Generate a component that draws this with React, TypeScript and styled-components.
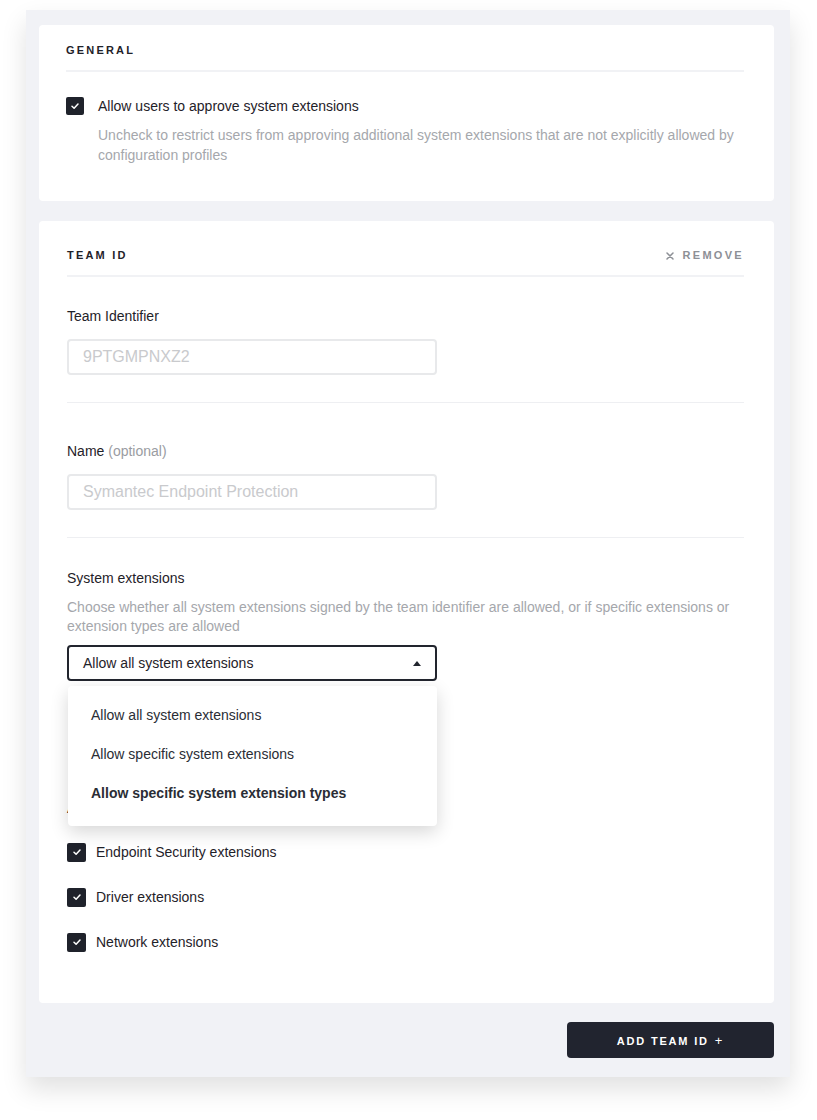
import styled, { createGlobalStyle } from "styled-components"

const GlobalStyle = createGlobalStyle`
  body {
    margin: 0;
    background: #ffffff;
    font-family: "Liberation Sans", Arial, sans-serif;
    color: #1f2229;
  }
`

const Page = styled.div`
  padding: 10px 27px 43px 26px;
`

const Panel = styled.div`
  background: #f1f2f6;
  box-shadow: 0 12px 24px rgba(0, 0, 0, 0.12);
  padding: 15px 16px 19px 13px;
  display: flex;
  flex-direction: column;
`

const Card = styled.section<{ $pad: string; $mt?: number }>`
  background: #ffffff;
  border-radius: 4px;
  padding: ${p => p.$pad};
  margin-top: ${p => p.$mt || 0}px;
`

const SectionHeader = styled.div<{ $top: number }>`
  display: flex;
  justify-content: space-between;
  align-items: center;
  height: 11px;
  padding-top: ${p => p.$top}px;
  padding-bottom: 14px;
  border-bottom: 2px solid #f1f2f5;
`

const Heading = styled.h2`
  margin: 0;
  font-size: 11px;
  line-height: 11px;
  font-weight: 700;
  letter-spacing: 2.2px;
  text-transform: uppercase;
  color: #1f2229;
`

const RemoveButton = styled.button`
  display: flex;
  align-items: center;
  gap: 9px;
  padding: 0;
  background: none;
  border: none;
  font-family: inherit;
  font-size: 11px;
  line-height: 11px;
  font-weight: 700;
  letter-spacing: 2.3px;
  color: #8d9096;
  cursor: pointer;
`

const CheckRow = styled.label<{ $gap: number; $mt: number }>`
  display: flex;
  align-items: center;
  gap: ${p => p.$gap}px;
  margin-top: ${p => p.$mt}px;
  font-size: 14px;
  line-height: 20px;
  color: #1f2229;
`

const Box = styled.span<{ $size: number }>`
  width: ${p => p.$size}px;
  height: ${p => p.$size}px;
  flex-shrink: 0;
  background: #1f222b;
  border-radius: 2px;
  display: flex;
  align-items: center;
  justify-content: center;
`

const Hint = styled.p<{ $indent?: number; $lh: number; $mt: number; $mb?: number }>`
  margin: ${p => p.$mt}px 0 ${p => p.$mb || 0}px ${p => p.$indent || 0}px;
  font-size: 14px;
  line-height: ${p => p.$lh}px;
  color: #a5a7ac;
`

const Field = styled.div<{ $top: number; $divider?: boolean }>`
  padding-top: ${p => p.$top}px;
  padding-bottom: ${p => (p.$divider ? 27 : 0)}px;
  border-bottom: ${p => (p.$divider ? "1px solid #eeeff2" : "none")};
`

const Label = styled.div<{ $mb: number }>`
  font-size: 14px;
  line-height: 20px;
  margin-bottom: ${p => p.$mb}px;
  color: #1f2229;
`

const Optional = styled.span`
  color: #9a9ca2;
`

const TextInput = styled.input`
  display: block;
  width: 370px;
  height: 36px;
  box-sizing: border-box;
  border: 2px solid #e8e9eb;
  border-radius: 4px;
  padding: 0 14px;
  font-family: "Liberation Sans", Arial, sans-serif;
  font-size: 16px;
  color: #1f2229;
  outline: none;
  &::placeholder {
    color: #c9cacd;
  }
`

const SelectWrap = styled.div`
  position: relative;
  width: 370px;
`

const SelectBox = styled.div`
  height: 36px;
  box-sizing: border-box;
  border: 2px solid #22252e;
  border-radius: 4px;
  padding: 0 14px;
  display: flex;
  justify-content: space-between;
  align-items: center;
  font-size: 14px;
  color: #1f2229;
`

const Menu = styled.ul`
  position: absolute;
  top: 41px;
  left: 1px;
  width: 369px;
  margin: 0;
  padding: 10px 0 13px;
  list-style: none;
  background: #ffffff;
  border-radius: 4px;
  box-shadow: 0 6px 18px rgba(0, 0, 0, 0.16);
  z-index: 2;
`

const MenuItem = styled.li<{ $active?: boolean }>`
  padding: 0 23px;
  line-height: 39px;
  font-size: 14px;
  font-weight: ${p => (p.$active ? 700 : 400)};
  color: #2a2d35;
`

const TypeList = styled.div`
  margin-top: 117px;
  display: flex;
  flex-direction: column;
`

const Footer = styled.div`
  display: flex;
  justify-content: flex-end;
  margin-top: 19px;
`

const PrimaryButton = styled.button`
  width: 207px;
  height: 36px;
  border: none;
  border-radius: 4px;
  background: #21242f;
  color: #ffffff;
  font-family: "Liberation Sans", Arial, sans-serif;
  font-size: 11px;
  font-weight: 700;
  letter-spacing: 1.8px;
  cursor: pointer;
`

const Plus = styled.span`
  margin-left: 6px;
  font-size: 13px;
  font-weight: 400;
`

function Check({ size }: { size: number }) {
  return (
    <Box $size={size}>
      <svg width="10" height="10" viewBox="0 0 10 10">
        <polyline points="2,5.2 4.1,7.2 8,3" fill="none" stroke="#ffffff" strokeWidth="1.5" strokeLinecap="round" strokeLinejoin="round" />
      </svg>
    </Box>
  )
}

const extensionTypes = ["Endpoint Security extensions", "Driver extensions", "Network extensions"]
const options = ["Allow all system extensions", "Allow specific system extensions", "Allow specific system extension types"]

export default function App() {
  return (
    <>
      <GlobalStyle />
      <Page>
        <Panel>
          <Card $pad="0 30px 36px 27px">
            <SectionHeader $top={20}>
              <Heading>General</Heading>
            </SectionHeader>
            <CheckRow $gap={14} $mt={24}>
              <Check size={18} />
              Allow users to approve system extensions
            </CheckRow>
            <Hint $indent={32} $lh={20} $mt={9}>
              Uncheck to restrict users from approving additional system extensions that are not explicitly allowed by configuration profiles
            </Hint>
          </Card>

          <Card $pad="0 30px 51px 28px" $mt={20}>
            <SectionHeader $top={29}>
              <Heading>Team ID</Heading>
              <RemoveButton>
                <svg width="8" height="8" viewBox="0 0 8 8">
                  <path d="M1 1 L7 7 M7 1 L1 7" stroke="#8d9096" strokeWidth="1.5" strokeLinecap="round" />
                </svg>
                REMOVE
              </RemoveButton>
            </SectionHeader>

            <Field $top={29} $divider>
              <Label $mb={13}>Team Identifier</Label>
              <TextInput placeholder="9PTGMPNXZ2" />
            </Field>

            <Field $top={38} $divider>
              <Label $mb={13}>
                Name <Optional>(optional)</Optional>
              </Label>
              <TextInput placeholder="Symantec Endpoint Protection" />
            </Field>

            <Field $top={30}>
              <Label $mb={10}>System extensions</Label>
              <Hint $lh={19} $mt={0} $mb={9}>
                Choose whether all system extensions signed by the team identifier are allowed, or if specific extensions or extension types are allowed
              </Hint>
              <SelectWrap>
                <SelectBox>
                  {options[0]}
                  <svg width="8" height="5" viewBox="0 0 8 5">
                    <polygon points="0,5 4,0 8,5" fill="#22252e" />
                  </svg>
                </SelectBox>
                <Menu>
                  {options.map((o, i) => (
                    <MenuItem key={o} $active={i === 2}>{o}</MenuItem>
                  ))}
                </Menu>
              </SelectWrap>
            </Field>

            <TypeList>
              <Label $mb={5}>Allowed system extension types</Label>
              {extensionTypes.map((t, i) => (
                <CheckRow key={t} $gap={10} $mt={i === 0 ? 19 : 25}>
                  <Check size={19} />
                  {t}
                </CheckRow>
              ))}
            </TypeList>
          </Card>

          <Footer>
            <PrimaryButton>
              ADD TEAM ID<Plus>+</Plus>
            </PrimaryButton>
          </Footer>
        </Panel>
      </Page>
    </>
  )
}
